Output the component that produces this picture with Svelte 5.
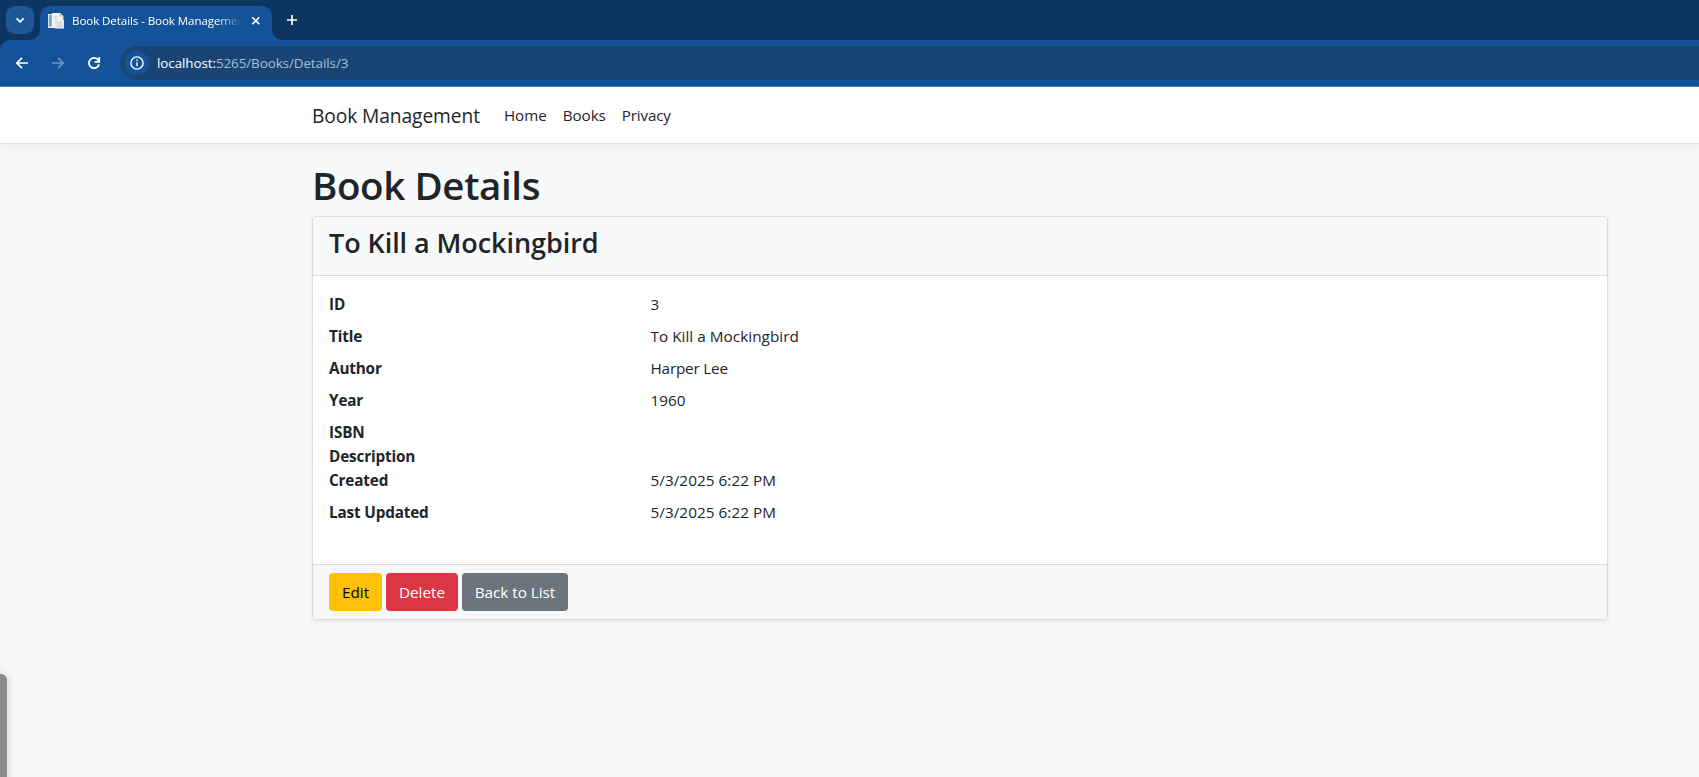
<script>
  const links = [
    { label: 'Home', spacing: 0 },
    { label: 'Books', spacing: -0.08 },
    { label: 'Privacy', spacing: -0.14 }
  ];
  const fields = [
    ['ID', '3', 0],
    ['Title', 'To Kill a Mockingbird', 0.03],
    ['Author', 'Harper Lee', -0.2],
    ['Year', '1960', 0],
    ['ISBN', '', 0],
    ['Description', '', 0],
    ['Created', '5/3/2025 6:22 PM', 0.04],
    ['Last Updated', '5/3/2025 6:22 PM', 0.04]
  ];
</script>

<div class="window">
  <div class="tabstrip">
    <button class="tabsearch" aria-label="Search tabs">
      <svg width="28" height="28" viewBox="0 0 28 28"><path d="M10.6 12.3l3.5 3.5 3.5-3.5" fill="none" stroke="#fff" stroke-width="1.8" /></svg>
    </button>
    <div class="tab">
      <svg class="favicon" width="16" height="16" viewBox="0 0 16 16">
        <path d="M0 1h5v14H0z" fill="#dfe9f0" />
        <path d="M1 2h2.6v11.5H1z" fill="#69a5cf" />
        <path d="M4 0h8l3.4 3v12H4z" fill="#f4f4f2" />
        <path d="M11.5 0v3.5h4z" fill="#c6cacc" />
        <path d="M7 7h9v8.6H7z" fill="#e6e6e4" />
        <path d="M6 3.5h4M6 5.5h4M9 10h5M9 12.5h5" stroke="#c8cccf" stroke-width=".8" />
      </svg>
      <span class="tabtitle">Book Details - Book Management</span>
      <svg class="close" width="10" height="10" viewBox="0 0 10 10"><path d="M1.3 1.3l7 7M8.3 1.3l-7 7" stroke="#fff" stroke-width="1.6" /></svg>
    </div>
    <svg class="plus" width="12" height="12" viewBox="0 0 12 12"><path d="M6 1v10M1 6h10" stroke="#fff" stroke-width="1.7" /></svg>
  </div>

  <div class="toolbar">
    <svg width="16" height="16" viewBox="0 0 16 16"><path d="M14 8H3M8 2.8L2.8 8 8 13.2" fill="none" stroke="#fff" stroke-width="1.7" /></svg>
    <svg width="16" height="16" viewBox="0 0 16 16"><path d="M2 8h11M8 2.8L13.2 8 8 13.2" fill="none" stroke="#7296c2" stroke-width="1.6" /></svg>
    <svg width="16" height="16" viewBox="0 0 16 16"><path d="M13 9.2A5.1 5.1 0 1 1 11.8 4.6L13 5.8" fill="none" stroke="#fff" stroke-width="1.8" /><path d="M13.2 2v4.8H8.6" fill="none" stroke="#fff" stroke-width="1.8" /></svg>
    <div class="omnibox">
      <span class="info">
        <svg width="24" height="24" viewBox="0 0 24 24"><circle cx="12" cy="12" r="6.1" fill="none" stroke="#fff" stroke-width="1.4" /><path d="M12 11.3v4M12 8.4v1.5" stroke="#fff" stroke-width="1.4" /></svg>
      </span>
      <span class="url"><b>localhost:</b>5265/Books/Details/3</span>
    </div>
  </div>

  <header>
    <nav class="container">
      <a class="brand" href="#home">Book Management</a>
      {#each links as l}
        <a class="link" href="#{l.label}" style:letter-spacing="{l.spacing}px">{l.label}</a>
      {/each}
    </nav>
  </header>

  <main class="container">
    <h1>Book Details</h1>
    <section class="card">
      <div class="card-header"><h2>To Kill a Mockingbird</h2></div>
      <dl>
        {#each fields as [name, value, spacing]}
          <dt>{name}</dt>
          <dd class:empty={!value} style:letter-spacing="{spacing}px">{value}</dd>
        {/each}
      </dl>
      <div class="card-footer">
        <button class="btn edit">Edit</button>
        <button class="btn delete">Delete</button>
        <button class="btn back">Back to List</button>
      </div>
    </section>
  </main>

  <div class="edge"></div>
</div>

<style>
  .window {
    position: relative;
    width: 1699px;
    height: 777px;
    overflow: hidden;
    background: #f8f9fa;
    color: #212529;
    font: 15.3px/24px 'Open Sans', sans-serif;
    box-sizing: border-box;
  }
  .window :is(div, section, header, nav, main, button, dl, dt, dd) { box-sizing: border-box; }
  .tabstrip {
    display: flex;
    align-items: flex-end;
    height: 40px;
    background: #0c355f;
  }
  .tabsearch {
    width: 28px;
    height: 28px;
    margin: 0 6px 6px;
    padding: 0;
    border: 0;
    border-radius: 9px;
    background: #1f5999;
  }
  .tabsearch svg { display: block; }
  .tab {
    position: relative;
    display: flex;
    align-items: center;
    width: 232px;
    height: 34px;
    padding: 0 11px 5px 8px;
    border-radius: 10px 10px 0 0;
    background: #14539a;
  }
  .tab::before,
  .tab::after {
    content: '';
    position: absolute;
    bottom: 0;
    width: 10px;
    height: 10px;
  }
  .tab::before { left: -10px; background: radial-gradient(circle at 0 0, transparent 9.5px, #14539a 10px); }
  .tab::after { right: -10px; background: radial-gradient(circle at 100% 0, transparent 9.5px, #14539a 10px); }
  .favicon { flex: none; margin-right: 8px; }
  .tabtitle {
    width: 168px;
    overflow: hidden;
    white-space: nowrap;
    color: #fff;
    font-size: 11.6px;
    letter-spacing: -0.1px;
    -webkit-mask-image: linear-gradient(90deg, #000 145px, transparent 170px);
    mask-image: linear-gradient(90deg, #000 145px, transparent 170px);
  }
  .close { flex: none; margin-left: 12px; }
  .plus { margin: 0 0 14px 14px; }
  .toolbar {
    display: flex;
    align-items: center;
    gap: 20px;
    height: 47px;
    padding-left: 14px;
    border-bottom: 1px solid #4377b4;
    border-top-left-radius: 10px;
    background: #14539a;
    box-shadow: -10px -10px 0 #0c355f;
  }
  .omnibox {
    display: flex;
    align-items: center;
    flex: 1;
    height: 34px;
    margin-left: -2px;
    padding-left: 5px;
    border-radius: 17px 0 0 17px;
    background: #1a4473;
  }
  .info {
    width: 24px;
    height: 24px;
    margin-right: 8px;
    border-radius: 50%;
    background: #14539a;
  }
  .info svg { display: block; }
  .url { color: #a9bdd6; font-size: 13.4px; letter-spacing: -0.07px; }
  .url b { color: #fff; font-weight: 400; }
  header {
    position: relative;
    height: 57px;
    border-bottom: 1px solid #dee2e6;
    background: #fff;
    box-shadow: 0 4px 12px rgba(0, 0, 0, 0.05);
  }
  .container {
    width: 1320px;
    margin-left: 300px;
    padding: 0 12px;
  }
  nav { display: flex; align-items: center; height: 56px; }
  nav a { color: #212529; text-decoration: none; }
  .brand { margin-right: 16px; padding-top: 2px; font-size: 19.2px; letter-spacing: -0.09px; }
  .link { padding: 0 8px; font-size: 15.2px; }
  main.container { padding-top: 16px; }
  h1, h2 { margin: 0 0 7px; padding-top: 1px; font-weight: 580; }
  h1 { font-size: 38.5px; line-height: 48px; letter-spacing: -0.38px; }
  .card {
    border: 1px solid #dcddde;
    border-radius: 4px;
    background: #fff;
    box-shadow: 0 2px 4px rgba(0, 0, 0, 0.075);
    overflow: hidden;
  }
  .card-header {
    padding: 8px 16px;
    border-bottom: 1px solid #d9dadb;
    background: #f8f9fa;
  }
  h2 { font-size: 27px; line-height: 33.6px; letter-spacing: -0.07px; }
  dl {
    display: grid;
    grid-template-columns: 321.5px 1fr;
    margin: 0;
    padding: 16px 16px 32px;
  }
  dt { font-weight: 700; letter-spacing: -0.17px; }
  dd { margin: 0 0 8px; }
  dd.empty { margin: 0; height: 24px; }
  .card-footer {
    display: flex;
    gap: 4px;
    padding: 8px 16px;
    border-top: 1px solid #d9d9d9;
    background: #f7f7f7;
  }
  .btn {
    height: 38px;
    padding: 0;
    border: 0;
    border-radius: 4px;
    color: #fff;
    font: inherit;
    white-space: nowrap;
  }
  .edit { width: 53px; background: #ffc107; color: #000; }
  .delete { width: 72px; background: #dc3545; }
  .back { width: 106px; background: #6c757d; letter-spacing: -0.04px; }
  .edge {
    position: absolute;
    left: -10px;
    top: 674px;
    width: 17px;
    height: 120px;
    border-radius: 6px;
    background: #8b8b8b;
    box-shadow: 0 0 10px rgba(0, 0, 0, 0.2);
  }
</style>
